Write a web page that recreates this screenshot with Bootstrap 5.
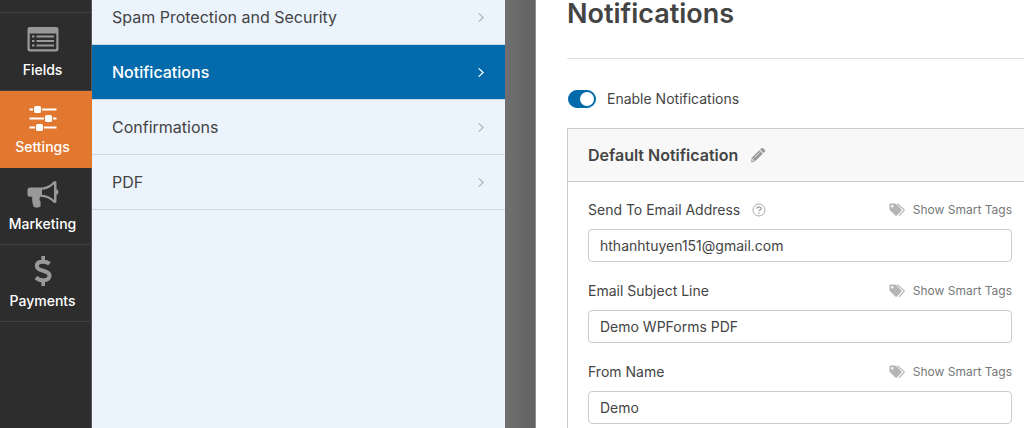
<!DOCTYPE html>
<html lang="en">
<head>
<meta charset="utf-8">
<meta name="viewport" content="width=device-width, initial-scale=1">
<title>Form settings – Notifications</title>
<link href="https://cdn.jsdelivr.net/npm/bootstrap@5.3.0/dist/css/bootstrap.min.css" rel="stylesheet">
<style>
  body { font-family: Inter, "Liberation Sans", sans-serif; color: #444; background: #fff; }
  .rail { width: 92px; padding-top: 14px; background: #2d2d2d; border-right: 1px solid #555; box-shadow: inset 0 12px 0 #2d2d2d, inset 0 13px 0 #424242; }
  .rail-item { height: 77px; margin-right: -1px; padding: 10px 7px 0 0; font-size: 14px; line-height: 20px; font-weight: 500; color: #fff; border-bottom: 1px solid #424242; }
  .rail-item svg { width: 32px; height: 32px; margin-bottom: 4px; color: #999; }
  .rail-item.active { background: #e27730; border-color: #e27730; }
  .rail-item.active svg { color: #fff; }
  .sections { width: 413px; background: #ebf3fc; }
  .section-list { margin-top: -10px; }
  .section-link { height: 55px; padding: 0 20px; font-size: 16px; color: #444; border-bottom: 1px solid #ced7e0; }
  .section-link svg { width: 8px; height: 11px; color: #b0b6bd; }
  .section-link.active { background: #036aab; color: #fff; font-weight: 500; }
  .section-link.active svg { color: #fff; }
  .gutter { width: 31px; background: linear-gradient(90deg, #6f6f6f, #626262); border-right: 1px solid #8c8c8c; }
  .settings { min-width: 0; padding-left: 31px; }
  .page-title { margin: 0; padding-bottom: 30px; font-size: 27px; line-height: 28px; font-weight: 600; border-bottom: 1px solid #ddd; }
  .enable { margin: 30px 0 19px; padding: 0; min-height: 20px; font-size: 14px; line-height: 20px; }
  .enable .form-check-input { width: 28px; height: 18px; margin: 0 11px 0 1px; float: none; border-color: #036aab; }
  .enable .form-check-input:checked { background-color: #036aab; background-image: url("data:image/svg+xml,%3csvg xmlns='http://www.w3.org/2000/svg' viewBox='-4 -4 8 8'%3e%3ccircle r='3.500' fill='%23fff'/%3e%3c/svg%3e"); }
  .panel { border: 1px solid #ccc; border-width: 1px 0 0 1px; }
  .panel-top { height: 53px; padding: 0 20px; background: #f8f8f8; border-bottom: 1px solid #ccc; }
  .panel-title { font-size: 16px; line-height: 20px; font-weight: 600; }
  .panel-body { padding: 18px 12px 4px 20px; }
  .field { margin-bottom: 19px; }
  .field-head { height: 20px; margin-bottom: 9px; font-size: 14px; line-height: 20px; }
  .tags-link { font-size: 12px; color: #777; }
  .field .form-control { height: 33px; padding: 0 11px; font-size: 14px; color: #444; border-color: #ccc; border-radius: 4px; }
  .icon-btn { color: #999; line-height: 0; }
</style>
</head>
<body>
<svg class="d-none" aria-hidden="true">
  <symbol id="chevron" viewBox="0 0 8 12"><path d="M1.500 1.500 6.300 6 1.500 10.500" fill="none" stroke="currentColor" stroke-width="1.400"/></symbol>
  <symbol id="tags" viewBox="0 0 16 14">
    <path fill="currentColor" fill-rule="evenodd" d="M1.500.5H5.600Q6.400.5 7 1.100L12.400 6.200Q13.100 7 12.400 7.700L7.900 12.600Q7.200 13.300 6.400 12.600L1 7.200Q.5 6.600.5 5.900V1.500Q.5.500 1.500.5ZM3.200 2A1.200 1.200 0 1 0 3.200 4.400 1.200 1.200 0 0 0 3.200 2Z"/>
    <path fill="none" stroke="currentColor" stroke-width="1.200" d="M8.300.7 14.800 6.400Q15.400 7 14.800 7.700L10 12.900"/>
  </symbol>
</svg>
<div class="d-flex min-vh-100">
  <nav class="rail flex-shrink-0 text-center" aria-label="Builder">
    <a href="#fields" class="rail-item d-block text-decoration-none">
      <svg viewBox="0 0 32 32" class="d-block mx-auto" aria-hidden="true"><path fill="currentColor" fill-rule="evenodd" d="M3 3H29Q31.500 3 31.500 5.500V25Q31.500 27.500 29 27.500H3Q.5 27.500.5 25V5.500Q.5 3 3 3ZM2.700 9.500V24Q2.700 25.300 4 25.300H28Q29.300 25.300 29.300 24V9.500Z"/><path fill="currentColor" d="M5 11.500h2.500v2H5zm4.500 0h17.500v2H9.500zM5 16h2.500v2H5zm4.500 0h17.500v2H9.500zM5 20.500h2.500v2H5zm4.500 0h17.500v2H9.500z"/></svg>Fields</a>
    <a href="#settings" class="rail-item active d-block text-decoration-none" aria-current="page">
      <svg viewBox="0 0 32 32" class="d-block mx-auto" aria-hidden="true"><path fill="currentColor" d="M2.500 7.500h27v2h-27zm0 9h27v2h-27zm0 9h27v2h-27z"/><path stroke="#e27730" stroke-width="5" d="M6 8.500h9M17 17.500h9M8 26.500h9"/><rect x="7" y="5" width="7" height="7" rx="1.500" fill="currentColor"/><rect x="18" y="14" width="7" height="7" rx="1.500" fill="currentColor"/><rect x="9" y="23" width="7" height="7" rx="1.500" fill="currentColor"/></svg>Settings</a>
    <a href="#marketing" class="rail-item d-block text-decoration-none">
      <svg viewBox="0 0 32 32" class="d-block mx-auto" aria-hidden="true"><path fill="currentColor" fill-rule="evenodd" d="M3 9.500H13C19 9.500 23.500 7 26.500 3.500Q29.500 2 29.500 5V11Q31.500 12 31.500 14T29.500 17V23Q29.500 26 26.500 24.500C23 21 19 19 13.200 18.800 12 21 12.500 22.500 13.800 24 13 26 14.200 27 13.500 28.300 12 30 8 30 6.700 28.800 5.500 25.500 4.800 23 5.300 18.800H3Q.5 18.800.5 16.300V12Q.5 9.500 3 9.500ZM15 11.800V16.800C20 17.200 24 19 27 22V6.200C24 9.200 20 11.400 15 11.800Z"/></svg>Marketing</a>
    <a href="#payments" class="rail-item d-block text-decoration-none">
      <svg viewBox="0 0 32 32" class="d-block mx-auto" aria-hidden="true"><path fill="none" stroke="currentColor" stroke-width="4" d="M22.500 8.800C19 6 9.800 5.700 9.800 11 9.800 17 22.500 14.500 22.500 20.500 22.500 26.500 13 26.500 9 22.500"/><path fill="currentColor" d="M14.400 1h3.600v6h-3.600zm0 24h3.600v6h-3.600z"/></svg>Payments</a>
  </nav>

  <div class="sections flex-shrink-0 overflow-hidden">
    <nav class="section-list" aria-label="Settings sections">
      <a href="#spam" class="section-link d-flex align-items-center justify-content-between text-decoration-none">Spam Protection and Security <svg aria-hidden="true"><use href="#chevron"/></svg></a>
      <a href="#notifications" class="section-link active d-flex align-items-center justify-content-between text-decoration-none" aria-current="true">Notifications <svg aria-hidden="true"><use href="#chevron"/></svg></a>
      <a href="#confirmations" class="section-link d-flex align-items-center justify-content-between text-decoration-none">Confirmations <svg aria-hidden="true"><use href="#chevron"/></svg></a>
      <a href="#pdf" class="section-link d-flex align-items-center justify-content-between text-decoration-none">PDF <svg aria-hidden="true"><use href="#chevron"/></svg></a>
    </nav>
  </div>
  <div class="gutter flex-shrink-0"></div>

  <main class="settings flex-grow-1">
    <h1 class="page-title">Notifications</h1>
    <div class="enable form-check form-switch d-flex align-items-center">
      <input class="form-check-input" type="checkbox" role="switch" id="enable" checked>
      <label for="enable">Enable Notifications</label>
    </div>
    <section class="panel">
      <div class="panel-top d-flex align-items-center gap-2">
        <h2 class="panel-title m-0">Default Notification</h2>
        <button type="button" class="icon-btn btn p-0 border-0 ms-1" aria-label="Rename"><svg width="16" height="16" viewBox="0 0 16 16" aria-hidden="true"><path fill="currentColor" d="M11.200 1.300Q12.200.5 13.100 1.300L14.800 3Q15.600 3.900 14.800 4.800L13.500 6 10 2.500ZM9.300 3.200 12.800 6.700 5.200 14.300 1 15.200 1.800 10.700Z"/><path stroke="#f8f8f8" stroke-width=".8" fill="none" d="M4.500 10.600 9.700 5.400M2.600 11.500v1.800h2"/></svg></button>
      </div>
      <form class="panel-body">
        <div class="field">
          <div class="field-head d-flex align-items-center">
            <label for="send-to">Send To Email Address</label>
            <button type="button" class="icon-btn btn p-0 border-0 ms-2 ps-1" aria-label="Help"><svg width="14" height="14" viewBox="0 0 14 14" fill="none" stroke="#aaa" aria-hidden="true"><circle cx="7" cy="7" r="6"/><path stroke-width="1.500" d="M4.900 5.600C5 3.400 9.100 3.400 9.100 5.500 9.100 6.900 7 6.700 7 8.300M7 9.400v1.400"/></svg></button>
            <a href="#tags" class="tags-link ms-auto d-flex align-items-center gap-2 text-decoration-none"><svg width="16" height="14" color="#b5b5b5" aria-hidden="true"><use href="#tags"/></svg>Show Smart Tags</a>
          </div>
          <input type="text" class="form-control" id="send-to" value="hthanhtuyen151@gmail.com">
        </div>
        <div class="field">
          <div class="field-head d-flex align-items-center">
            <label for="subject">Email Subject Line</label>
            <a href="#tags" class="tags-link ms-auto d-flex align-items-center gap-2 text-decoration-none"><svg width="16" height="14" color="#b5b5b5" aria-hidden="true"><use href="#tags"/></svg>Show Smart Tags</a>
          </div>
          <input type="text" class="form-control" id="subject" value="Demo WPForms PDF">
        </div>
        <div class="field mb-0">
          <div class="field-head d-flex align-items-center">
            <label for="from-name">From Name</label>
            <a href="#tags" class="tags-link ms-auto d-flex align-items-center gap-2 text-decoration-none"><svg width="16" height="14" color="#b5b5b5" aria-hidden="true"><use href="#tags"/></svg>Show Smart Tags</a>
          </div>
          <input type="text" class="form-control" id="from-name" value="Demo">
        </div>
      </form>
    </section>
  </main>
</div>
<script src="https://cdn.jsdelivr.net/npm/bootstrap@5.3.0/dist/js/bootstrap.bundle.min.js"></script>
</body>
</html>
